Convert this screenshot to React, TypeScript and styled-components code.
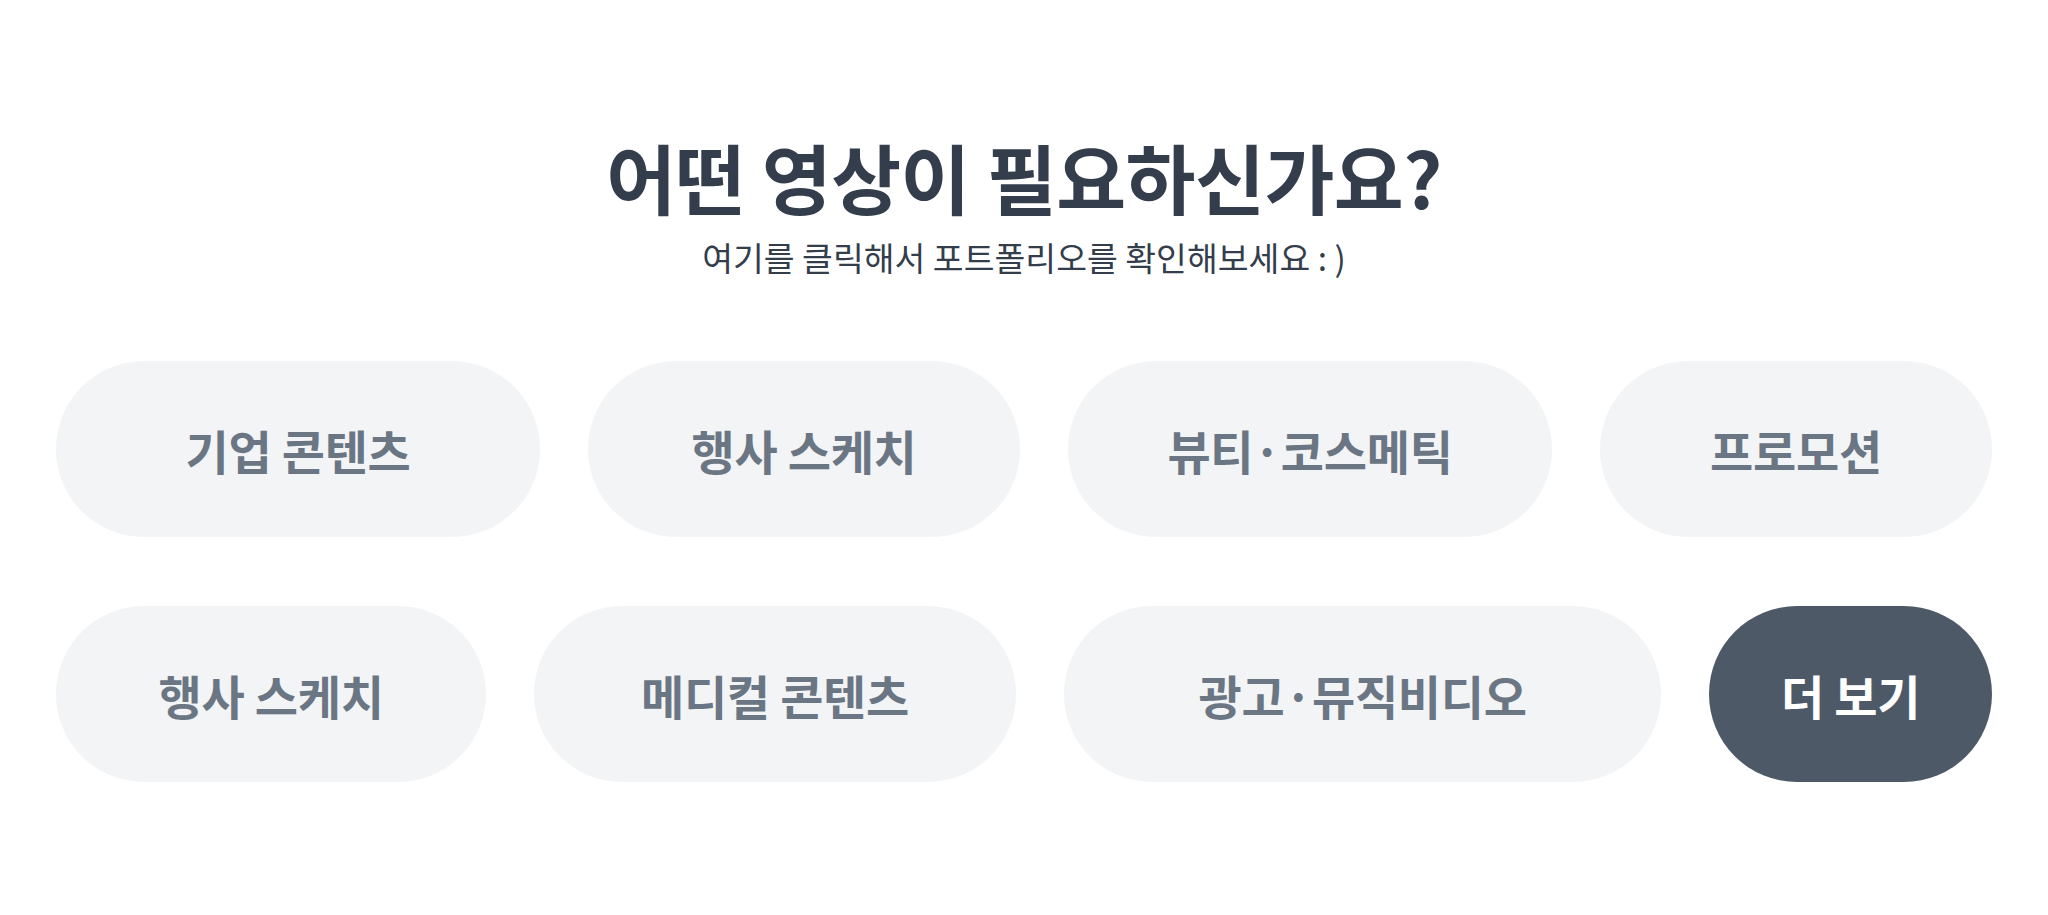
import styled, {createGlobalStyle} from 'styled-components';

const GlobalStyle = createGlobalStyle`
  html, body {
    margin: 0;
    padding: 0;
    background: #ffffff;
  }
  body {
    font-family: 'Noto Sans CJK KR', 'Noto Sans', sans-serif;
  }
`;

interface Item {
  label: string;
  width: number;
  dark?: boolean;
}

const rows: Item[][] = [
  [
    {label: '기업 콘텐츠', width: 484},
    {label: '행사 스케치', width: 432},
    {label: '뷰티·코스메틱', width: 484},
    {label: '프로모션', width: 392},
  ],
  [
    {label: '행사 스케치', width: 432},
    {label: '메디컬 콘텐츠', width: 484},
    {label: '광고·뮤직비디오', width: 600},
    {label: '더 보기', width: 284, dark: true},
  ],
];

const Section = styled.section`
  display: flex;
  flex-direction: column;
  align-items: center;
  padding-top: 128px;
`;

const Title = styled.h2`
  margin: 0;
  font-size: 76px;
  line-height: 96px;
  font-weight: 700;
  color: #333d4b;
  letter-spacing: -0.5px;
`;

const Subtitle = styled.p`
  margin: 10px 0 0;
  font-size: 33.5px;
  line-height: 46px;
  font-weight: 400;
  color: #333d4b;
`;

const Grid = styled.div`
  width: 1936px;
  margin-top: 81px;
  display: flex;
  flex-direction: column;
  gap: 69px;
`;

const Row = styled.div`
  display: flex;
  gap: 48px;
`;

const Pill = styled.button<{$w: number; $dark?: boolean}>`
  width: ${({$w}) => $w}px;
  height: 176px;
  border: none;
  border-radius: 88px;
  background: ${({$dark}) => ($dark ? '#4e5968' : '#f2f4f6')};
  color: ${({$dark}) => ($dark ? '#ffffff' : '#6b7684')};
  font-family: inherit;
  font-size: 47px;
  font-weight: 700;
  letter-spacing: -0.3px;
  cursor: pointer;
  display: flex;
  align-items: center;
  justify-content: center;
  padding: 0;
`;

export default function App() {
  return (
    <>
      <GlobalStyle />
      <Section>
        <Title>어떤 영상이 필요하신가요?</Title>
        <Subtitle>여기를 클릭해서 포트폴리오를 확인해보세요 : )</Subtitle>
        <Grid>
          {rows.map((row, i) => (
            <Row key={i}>
              {row.map((item) => (
                <Pill key={item.label} $w={item.width} $dark={item.dark}>
                  {item.label}
                </Pill>
              ))}
            </Row>
          ))}
        </Grid>
      </Section>
    </>
  );
}
